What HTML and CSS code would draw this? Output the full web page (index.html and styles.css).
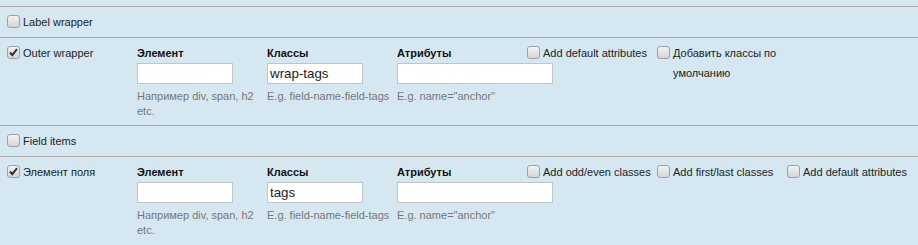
FILE: index.html
```html
<!doctype html>
<html>
    <head>
        <meta charset="utf-8">
        <title>Field display settings</title>
        <link rel="stylesheet" href="styles.css">
    </head>

    <body>
        <div class="settings">
            <div class="row simple">
                <label class="check"><span class="cb"></span>Label wrapper</label>
            </div>

            <div class="row wrapper">
                <label class="check"><span class="cb on"><svg viewBox="0 0 13 13"><path d="M3 6.5 L5.3 9.2 L10 3.2" /></svg></span>Outer wrapper</label>
                <div class="field">
                    <div class="field-title">Элемент</div>
                    <input class="text short" type="text">
                    <div class="hint">Например div, span, h2 etc.</div>
                </div>
                <div class="field">
                    <div class="field-title">Классы</div>
                    <input class="text short" type="text" value="wrap-tags">
                    <div class="hint nowrap">E.g. field-name-field-tags</div>
                </div>
                <div class="field">
                    <div class="field-title">Атрибуты</div>
                    <input class="text long" type="text">
                    <div class="hint nowrap">E.g. name="anchor"</div>
                </div>
                <label class="check"><span class="cb"></span>Add default attributes</label>
                <label class="check"><span class="cb"></span>Добавить классы по умолчанию</label>
            </div>

            <div class="row simple">
                <label class="check"><span class="cb"></span>Field items</label>
            </div>

            <div class="row wrapper">
                <label class="check"><span class="cb on"><svg viewBox="0 0 13 13"><path d="M3 6.5 L5.3 9.2 L10 3.2" /></svg></span>Элемент поля</label>
                <div class="field">
                    <div class="field-title">Элемент</div>
                    <input class="text short" type="text">
                    <div class="hint">Например div, span, h2 etc.</div>
                </div>
                <div class="field">
                    <div class="field-title">Классы</div>
                    <input class="text short" type="text" value="tags">
                    <div class="hint nowrap">E.g. field-name-field-tags</div>
                </div>
                <div class="field">
                    <div class="field-title">Атрибуты</div>
                    <input class="text long" type="text">
                    <div class="hint nowrap">E.g. name="anchor"</div>
                </div>
                <label class="check"><span class="cb"></span>Add odd/even classes</label>
                <label class="check"><span class="cb"></span>Add first/last classes</label>
                <label class="check"><span class="cb"></span>Add default attributes</label>
            </div>
        </div>
    </body>
</html>
```

FILE: styles.css
```css
body{
    margin: 0px;
    background-color: #d5e8f1;
    color: #222;
    font-family: 'Liberation Sans', Arial, sans-serif;
    font-size: 11px;
}

.settings{
    padding-top: 6px;
}

.row{
    border-top: 1px solid #a8a8a8;
    padding: 5px 7px;
}

.row.simple{
    height: 20px;
}

.row.wrapper{
    display: grid;
    grid-template-columns: repeat(7, 130px);
    align-items: start;
    padding-bottom: 6px;
}

.check{
    display: flex;
    align-items: flex-start;
    line-height: 20px;
}

.cb{
    flex: none;
    width: 11px;
    height: 11px;
    margin: 3px 3px 0 0;
    border: 1px solid #a0a0a0;
    border-radius: 3px;
    background: linear-gradient(#f2f2f2, #d6d6d6);
    position: relative;
}

.cb svg{
    position: absolute;
    left: -1px;
    top: -1px;
    width: 13px;
    height: 13px;
}

.cb svg path{
    fill: none;
    stroke: #333;
    stroke-width: 2;
}

.field{
    width: 122px;
}

.field-title{
    font-weight: bold;
    color: #111;
    line-height: 20px;
}

.text{
    display: block;
    box-sizing: border-box;
    height: 21px;
    margin: 0px;
    padding: 1px 2px;
    border: 1px solid #c4c4c4;
    background: white;
    color: #222;
    font-family: 'Liberation Sans', Arial, sans-serif;
    font-size: 13.33px;
}

.short{
    width: 96px;
}

.long{
    width: 156px;
}

.hint{
    margin-top: 5px;
    color: #777;
    line-height: 15px;
}

.nowrap{
    white-space: nowrap;
}
```
